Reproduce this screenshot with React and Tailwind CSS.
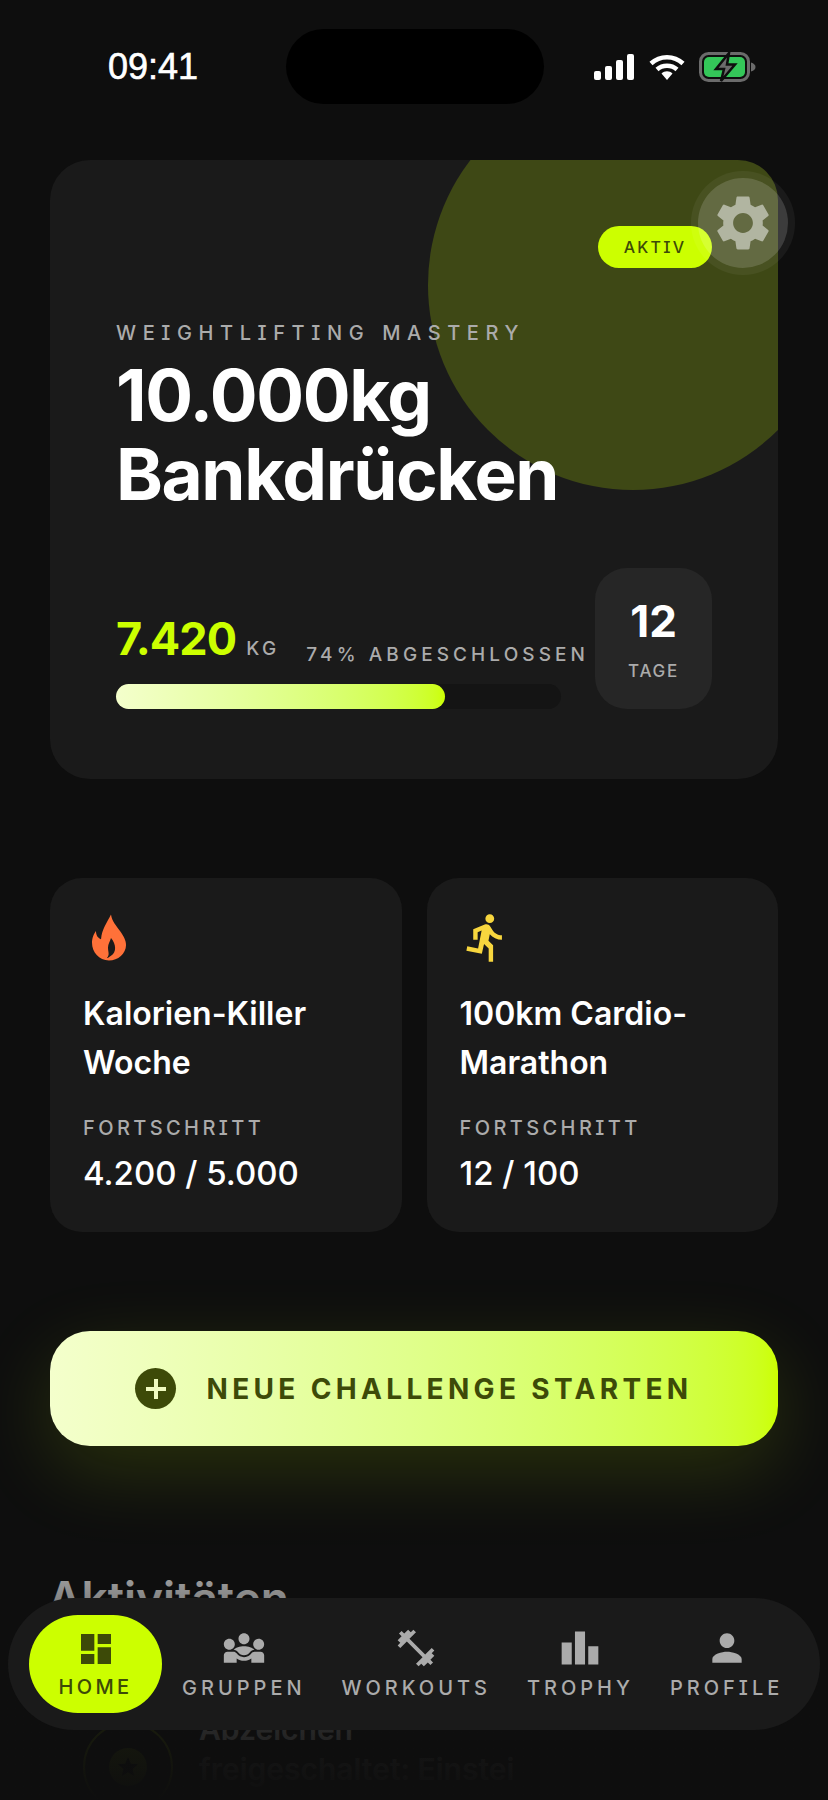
import React from "react";
import { MdSettings, MdDirectionsRun, MdDashboard, MdDiversity3, MdFitnessCenter, MdLeaderboard, MdPerson, MdStar } from "react-icons/md";

const navItems = [
  { label: "GRUPPEN", Icon: MdDiversity3 },
  { label: "WORKOUTS", Icon: MdFitnessCenter },
  { label: "TROPHY", Icon: MdLeaderboard },
  { label: "PROFILE", Icon: MdPerson },
];

function FlameIcon({ className }) {
  return (
    <svg className={className} viewBox="3 5 53 45" preserveAspectRatio="none" fill="currentColor">
      <path
        fillRule="evenodd"
        d="M31 8C32 14 36 17 40 22C44 27 46 30 46 34C46 41 38 47 29 47C19 47 12 40 12 32C12 28 14 24 16 22C16 26 18 28 21 29C22 20 27 15 31 8ZM31 28C30 31 28 33 28 36C28 40 30 42 27 45C28 45 29.500 44 31 43C37 40 36 33 31 28Z"
      />
    </svg>
  );
}

function StatusIcons() {
  return (
    <div className="flex items-center ml-[50px]">
      <svg width="40" height="28" viewBox="0 0 40 28" fill="#fff">
        <rect x="0" y="18" width="7" height="9" rx="2" />
        <rect x="11" y="13" width="7" height="14" rx="2" />
        <rect x="22" y="7" width="7" height="20" rx="2" />
        <rect x="33" y="1" width="7" height="26" rx="2" />
      </svg>
      <svg className="ml-[15px]" width="36" height="28" viewBox="0 0 36 28" fill="none">
        <path d="M2 10.5C11 2 25 2 34 10.5" stroke="#fff" strokeWidth="4.5" />
        <path d="M8 16.5C13.5 11.5 22.5 11.5 28 16.5" stroke="#fff" strokeWidth="4.5" />
        <path d="M12.5 20.5C15.5 17.5 20.5 17.5 23.5 20.5L18 27Z" fill="#fff" />
      </svg>
      <svg className="ml-[14px]" width="57" height="30" viewBox="0 0 57 30" fill="none">
        <rect x="1.5" y="1.5" width="48" height="27" rx="8" stroke="#6b6b6b" strokeWidth="3" />
        <rect x="5" y="5" width="41" height="20" rx="5" fill="#34c759" />
        <path d="M52 10.5C55 11.5 56.5 13 56.5 15S55 18.5 52 19.5Z" fill="#6b6b6b" />
        <path d="M30 1L17 17H25L22 29L36 12.5H28Z" fill="#6b6b6b" stroke="#0e0e0e" strokeWidth="2.5" />
      </svg>
    </div>
  );
}

function SmallCard({ Icon, iconColor, title, value }) {
  return (
    <div className="flex-1 bg-[#1a1a1a] rounded-[32px] pl-[33px] pr-4 pt-[33px] pb-[39px]">
      <Icon className={`w-[53px] h-[53px] ${iconColor}`} />
      <h3 className="mt-[25px] text-[32px] leading-[49px] font-semibold text-white whitespace-pre-line">{title}</h3>
      <p className="mt-[27px] text-[20px] leading-[28px] font-medium tracking-[0.17em] text-[#ababab] [font-feature-settings:'cv08']">FORTSCHRITT</p>
      <p className="mt-[11px] text-[33px] leading-[40px] font-medium text-white">{value}</p>
    </div>
  );
}

export default function App() {
  return (
    <div className="relative w-[828px] h-[1800px] overflow-hidden bg-[#0e0e0e] font-['Inter',sans-serif]">
      {/* status bar */}
      <div className="flex items-center pl-[108px] pt-[29px] h-[104px]">
        <span className="w-[90px] font-['Liberation_Sans',sans-serif] text-[36px] leading-none text-white [-webkit-text-stroke:0.6px_white]">09:41</span>
        <div className="ml-[88px] w-[258px] h-[75px] rounded-[38px] bg-black" />
        <StatusIcons />
      </div>

      <main className="px-[50px] pt-[56px]">
        {/* hero card */}
        <div className="relative">
          <section className="relative overflow-hidden bg-[#1a1a1a] rounded-[40px] px-[66px] pt-[66px] pb-[70px]">
            <div className="absolute left-[378px] top-[-80px] w-[410px] h-[410px] rounded-full bg-[#ccff00]/20" />
            <div className="relative">
              <div className="flex justify-end">
                <span className="w-[114px] h-[42px] flex items-center justify-center rounded-full bg-[#ccff00] text-[16px] font-medium tracking-[0.14em] text-[#3d4a08] [font-feature-settings:'cv08']">AKTIV</span>
              </div>
              <p className="mt-[51px] text-[20px] leading-[28px] font-medium tracking-[0.33em] text-[#ababab] [font-feature-settings:'cv08']">WEIGHTLIFTING MASTERY</p>
              <h1 className="mt-[9px] text-[71px] leading-[79px] font-bold text-white tracking-[-0.02em]">10.000kg<br />Bankdrücken</h1>
              <div className="mt-[54px] flex items-end gap-[34px]">
                <div className="flex-1 min-w-0">
                  <div className="flex items-end justify-between">
                    <div className="flex items-baseline gap-[10px] mb-[2px]">
                      <span className="text-[45px] leading-[52px] font-bold text-[#ccff00] tracking-[-0.02em]">7.420</span>
                      <span className="text-[19px] font-medium tracking-[0.18em] text-[#ababab]">KG</span>
                    </div>
                    <span className="text-[19px] leading-[24px] font-medium tracking-[0.215em] text-[#ababab] whitespace-nowrap -mr-[28px]">74% ABGESCHLOSSEN</span>
                  </div>
                  <div className="mt-[17px] h-[25px] w-[445px] rounded-full bg-[#141414]">
                    <div className="h-full w-[74%] rounded-full bg-gradient-to-r from-[#f4ffcc] to-[#ccff00]" />
                  </div>
                </div>
                <div className="w-[117px] h-[141px] shrink-0 rounded-[32px] bg-[#262626] flex flex-col items-center pt-[30px]">
                  <span className="text-[44px] leading-[46px] font-bold text-white">12</span>
                  <span className="mt-[17px] text-[17px] leading-[20px] font-medium tracking-[0.1em] text-[#ababab]">TAGE</span>
                </div>
              </div>
            </div>
          </section>
          {/* floating settings button */}
          <div className="absolute left-[641px] top-[11px] w-[104px] h-[104px] rounded-full bg-white/5 flex items-center justify-center">
            <div className="w-[90px] h-[90px] rounded-full bg-white/15 flex items-center justify-center">
              <MdSettings className="w-[66px] h-[66px] text-white/50" />
            </div>
          </div>
        </div>

        {/* challenge cards */}
        <div className="mt-[99px] flex gap-[25px]">
          <SmallCard Icon={FlameIcon} iconColor="text-[#ff7139]" title={"Kalorien-Killer\nWoche"} value="4.200 / 5.000" />
          <SmallCard Icon={MdDirectionsRun} iconColor="text-[#f7d63e]" title={"100km Cardio-\nMarathon"} value="12 / 100" />
        </div>

        {/* cta */}
        <button className="mt-[99px] w-full h-[115px] rounded-[40px] flex items-center justify-center gap-[30px] bg-gradient-to-r from-[#f4ffcc] to-[#ccff00] shadow-[0_24px_80px_rgba(204,255,0,0.15)]">
          <span className="w-[41px] h-[41px] rounded-full bg-[#3d4a08] flex items-center justify-center">
            <svg width="22" height="22" viewBox="0 0 22 22" stroke="#f0fbc0" strokeWidth="4">
              <path d="M11 1V21M1 11H21" />
            </svg>
          </span>
          <span className="text-[28px] font-bold tracking-[0.155em] text-[#3d4a08]">NEUE CHALLENGE STARTEN</span>
        </button>

        {/* activity list, mostly behind the nav */}
        <h2 className="mt-[125px] -ml-[2px] text-[46px] leading-[54px] font-semibold text-white">Aktivitäten</h2>
        <div className="mt-[97px] ml-[33px] flex items-start gap-[26px]">
          <div className="w-[90px] h-[90px] shrink-0 rounded-full border-2 border-[#ccff00]/50 flex items-center justify-center">
            <span className="w-[38px] h-[38px] rounded-full bg-[#ccff00]/40 flex items-center justify-center">
              <MdStar className="w-[24px] h-[24px] text-black" />
            </span>
          </div>
          <p className="text-[30px] leading-[40px] font-semibold text-white -mt-[13px] whitespace-nowrap">
            Abzeichen<br /><span className="text-white/40">freigeschaltet: Einstei</span>
          </p>
        </div>
      </main>

      {/* bottom fade */}
      <div className="absolute inset-x-0 bottom-0 h-[270px] bg-gradient-to-b from-[#0e0e0e]/20 via-[#0e0e0e]/80 to-[#0e0e0e]" />

      {/* tab bar */}
      <nav className="absolute left-[8px] top-[1598px] w-[812px] h-[132px] rounded-[66px] bg-[#1a1a1a] flex items-center pl-[21px]">
        <div className="w-[133px] h-[98px] rounded-[49px] bg-[#ccff00] flex flex-col items-center pt-[14px] mr-[2px] text-[#3d4a08]">
          <MdDashboard className="w-[40px] h-[40px]" />
          <span className="mt-[6px] text-[20px] leading-[24px] font-medium tracking-[0.17em]">HOME</span>
        </div>
        {navItems.map(({ label, Icon }) => (
          <div key={label} className="flex flex-col items-center px-[18px] text-[#ababab]">
            <Icon className="w-[44px] h-[44px] -mt-[2px]" />
            <span className="mt-[6px] text-[20px] leading-[24px] font-medium tracking-[0.2em] whitespace-nowrap [font-feature-settings:'cv08']">{label}</span>
          </div>
        ))}
      </nav>
    </div>
  );
}
